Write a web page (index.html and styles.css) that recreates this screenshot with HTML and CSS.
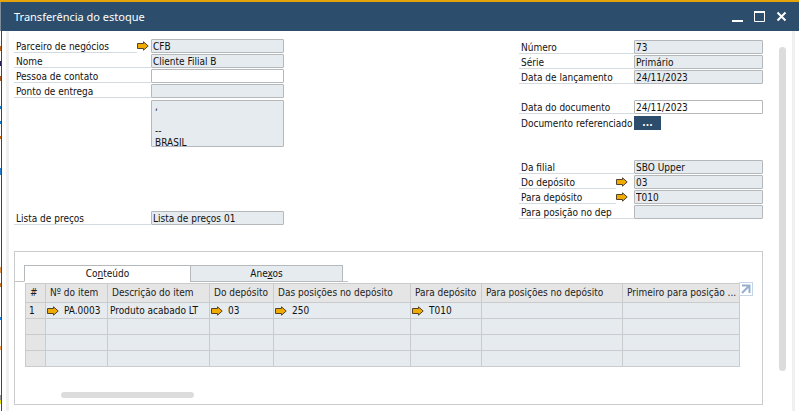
FILE: index.html
```
<!DOCTYPE html>
<html lang="pt-BR">
<head>
<meta charset="utf-8">
<title>Transferência do estoque</title>
<link rel="stylesheet" href="styles.css">
</head>
<body>
<svg class="symbols">
  <symbol id="link-arrow" viewBox="0 0 12 10">
    <path d="M.5 2.500h6V.8L11.2 5 6.500 9.200V7.500h-6z" fill="#f0ab00" stroke="#54432c"/>
  </symbol>
</svg>
<div class="backdrop"></div>
<main class="window">
  <header class="titlebar">
    <h1>Transferência do estoque</h1>
    <div class="window-buttons">
      <button type="button" aria-label="Minimizar"><svg viewBox="0 0 12 12"><path d="M0 9h11v2H0z" fill="#fff"/></svg></button>
      <button type="button" aria-label="Maximizar"><svg viewBox="0 0 12 12"><path d="M.5 1v9.500h10V1" fill="none" stroke="#fff"/><path d="M0 0h11v2H0z" fill="#fff"/></svg></button>
      <button type="button" aria-label="Fechar"><svg viewBox="0 0 12 12"><path d="M1.500 1.500l8 8m0-8l-8 8" fill="none" stroke="#fff" stroke-width="2"/></svg></button>
    </div>
  </header>
  <div class="frame">
    <div class="content">
      <form class="fields">
        <div class="column left">
          <div class="row linked"><label for="bp">Parceiro de negócios</label><svg class="arrow"><use href="#link-arrow"/></svg><input id="bp" value="CFB" readonly></div>
          <div class="row"><label for="name">Nome</label><input id="name" value="Cliente Filial B" readonly></div>
          <div class="row"><label for="contact">Pessoa de contato</label><input id="contact"></div>
          <div class="row"><label for="ship">Ponto de entrega</label><input id="ship" readonly></div>
          <div class="row address"><textarea id="address" aria-label="Endereço" readonly>,

--
BRASIL</textarea></div>
          <div class="row price"><label for="price">Lista de preços</label><input id="price" value="Lista de preços 01" readonly></div>
        </div>
        <div class="column right">
          <div class="row"><label for="number">Número</label><input id="number" value="73" readonly></div>
          <div class="row"><label for="series">Série</label><input id="series" value="Primário" readonly></div>
          <div class="row"><label for="posting">Data de lançamento</label><input id="posting" value="24/11/2023" readonly></div>
          <div class="row spaced"><label for="docdate">Data do documento</label><input id="docdate" value="24/11/2023"></div>
          <div class="row reference"><label for="refdoc">Documento referenciado</label><button type="button" id="refdoc">...</button></div>
          <div class="row branch"><label for="branch">Da filial</label><input id="branch" value="SBO Upper" readonly></div>
          <div class="row linked"><label for="from">Do depósito</label><svg class="arrow"><use href="#link-arrow"/></svg><input id="from" value="03" readonly></div>
          <div class="row linked"><label for="to">Para depósito</label><svg class="arrow"><use href="#link-arrow"/></svg><input id="to" value="T010" readonly></div>
          <div class="row"><label for="bin">Para posição no dep</label><input id="bin" readonly></div>
        </div>
      </form>
      <section class="panel">
        <div class="tabs" role="tablist">
          <button type="button" role="tab" aria-selected="true">Co<u>n</u>teúdo</button>
          <button type="button" role="tab" aria-selected="false">Ane<u>x</u>os</button>
        </div>
        <div class="grid">
          <table>
            <colgroup><col class="c-num"><col class="c-item"><col class="c-desc"><col class="c-from"><col class="c-frombin"><col class="c-to"><col class="c-tobin"><col class="c-first"></colgroup>
            <thead><tr><th>#</th><th>Nº do item</th><th>Descrição do item</th><th>Do depósito</th><th>Das posições no depósito</th><th>Para depósito</th><th>Para posições no depósito</th><th>Primeiro para posição ...</th></tr></thead>
            <tbody>
              <tr><th>1</th><td><span class="cell"><svg class="arrow"><use href="#link-arrow"/></svg>PA.0003</span></td><td>Produto acabado LT</td><td><span class="cell"><svg class="arrow"><use href="#link-arrow"/></svg>03</span></td><td><span class="cell"><svg class="arrow"><use href="#link-arrow"/></svg>250</span></td><td><span class="cell"><svg class="arrow"><use href="#link-arrow"/></svg>T010</span></td><td></td><td></td></tr>
              <tr><th></th><td></td><td></td><td></td><td></td><td></td><td></td><td></td></tr>
              <tr><th></th><td></td><td></td><td></td><td></td><td></td><td></td><td></td></tr>
              <tr><th></th><td></td><td></td><td></td><td></td><td></td><td></td><td></td></tr>
            </tbody>
          </table>
          <button type="button" class="expand" aria-label="Expandir"><svg viewBox="0 0 10 10"><path d="M1 1.500h7.500V9M8 2L1 9" fill="none" stroke="#95afd0" stroke-width="2"/></svg></button>
        </div>
        <div class="hscroll"></div>
      </section>
    </div>
    <div class="vscroll"></div>
  </div>
</main>
</body>
</html>
```
FILE: styles.css
```
* { box-sizing: border-box; }

body {
  margin: 0;
  min-height: 100vh;
  display: flex;
  border-top: 2px solid #e5a50a;
  background: #fff;
  color: #111;
  font: 10px/12px "DejaVu Sans Condensed", "DejaVu Sans", sans-serif;
}

button, input, textarea { font: inherit; color: inherit; margin: 0; }
button { padding: 0; border: 0; background: none; }
.symbols { display: none; }

/* Edge of the window lying behind this one */
.backdrop {
  flex: 0 0 1px;
  background: linear-gradient(#7f8c99 0 29px, #fff 29px 44px, #c0641c 44px 49px, #fff 49px 59px, #2c1c5c 59px 64px, #fff 64px 74px, #a85820 74px 79px, #fff 79px 104px, #1878c8 104px 107px, #fff 107px 119px, #1878c8 119px 122px, #fff 122px 134px, #c86c10 134px 137px, #fff 137px 166px, #2c80d0 166px 173px, #fff 173px 265px, #e09850 265px 271px, #fff 271px 281px, #c87820 281px 285px, #fff 285px 315px, #2080e0 315px 318px, #fff 318px 344px, #f0a050 344px 348px, #fff 348px 393px, #999 393px 398px, #e8e000 398px 402px, #fff 402px);
}

.window {
  flex: 1;
  min-width: 0;
  display: flex;
  flex-direction: column;
  border-left: 1px solid #2c4c6c;
}

.titlebar {
  display: flex;
  align-items: center;
  justify-content: space-between;
  height: 29px;
  padding: 0 11px 0 12px;
  background: #2c4e6c;
  color: #fff;
}

.titlebar h1 { margin: 0; font: 11px/16px "Noto Sans", sans-serif; }
.window-buttons { display: flex; gap: 10px; }
.window-buttons svg { display: block; width: 12px; height: 12px; }

.frame {
  flex: 1;
  display: flex;
  margin: 0 4px;
  border: solid #f0f0f0;
  border-width: 0 3px;
}

.content { flex: 1; min-width: 0; padding: 8px 0 6px 5px; }

.fields { display: flex; justify-content: space-between; }
.left { width: 270px; }
.right { width: 244px; padding-top: 1px; }

.row {
  display: grid;
  grid-template-columns: 137px 1fr;
  height: 14px;
  margin-bottom: 1px;
}
.right .row { grid-template-columns: 115px 1fr; }
.row.linked { grid-template-columns: 123px 14px 1fr; }
.right .row.linked { grid-template-columns: 97px 18px 1fr; }

label {
  overflow: hidden;
  padding: 2px 2px 0;
  border-bottom: 1px solid #d3dae0;
  line-height: 11px;
  white-space: nowrap;
}

input, textarea {
  min-width: 0;
  width: 100%;
  height: 14px;
  padding: 0 1px;
  border: 1px solid #b4b8bb;
  border-radius: 1px;
  background: #fff;
  outline: 0;
}
input:read-only, textarea:read-only { background: #e6ebef; }

.arrow { display: block; width: 12px; height: 10px; }
.row .arrow { align-self: center; }

.row.address { height: 47px; margin-top: 2px; }
textarea {
  grid-column: 2;
  height: 47px;
  padding: 0 3px;
  resize: none;
  overflow: hidden;
}
.row.price { margin-top: 64px; }

.row.spaced { margin-top: 16px; }
.row.reference { margin-top: 2px; }
.reference label { border: 0; }
.reference button { width: 27px; background: #2c4e6c; color: #fff; font-weight: bold; }
.row.branch { margin-top: 30px; }

.panel {
  margin-top: 25px;
  padding: 13px 0 6px;
  border: 1px solid #c9cbcc;
}

.tabs { display: flex; border-bottom: 1px solid #c0c4c8; width: 333px; padding-left: 9px; }
.tabs button {
  width: 167px;
  height: 17px;
  margin-bottom: -1px;
  border: 1px solid #b5b9bc;
  border-bottom-color: #fff;
  background: #fff;
}
.tabs button + button { width: 153px; margin-left: -1px; background: #e6ebef; border-bottom-color: #b5b9bc; }

.grid { display: flex; align-items: flex-start; margin: 1px 9px 0 10px; }

table { flex: 1; min-width: 0; width: 100%; border-collapse: collapse; table-layout: fixed; }
.c-num { width: 20px; }
.c-item { width: 62px; }
.c-desc { width: 102px; }
.c-from { width: 64px; }
.c-frombin { width: 137px; }
.c-to { width: 71px; }
.c-tobin { width: 141px; }
.c-first { width: 117px; }
th, td {
  height: 16px;
  padding: 0 1px;
  border: 1px solid #c9cbcd;
  overflow: hidden;
  white-space: nowrap;
  text-align: left;
  font-weight: normal;
  background: #e6ebef;
}
td { padding-left: 2px; }
th { background: #e5e5e5; }
thead th { height: 19px; padding-left: 4px; color: #222; }
tbody th { padding-left: 3px; }
.cell { display: flex; align-items: center; gap: 5px; margin-left: -1px; }

.expand { flex: none; border: 1px solid #c3d5e6; width: 14px; height: 14px; margin: -1px 0 0 -1px; }
.expand svg { display: block; width: 10px; height: 10px; margin: 1px; }

.hscroll { width: 133px; height: 6px; margin: 25px 0 0 46px; border-radius: 3px; background: #dcdcdc; }
.vscroll { flex: 0 0 7px; height: 324px; margin: 16px 6px 0 16px; border-radius: 4px; background: #dcdcdc; }
```
